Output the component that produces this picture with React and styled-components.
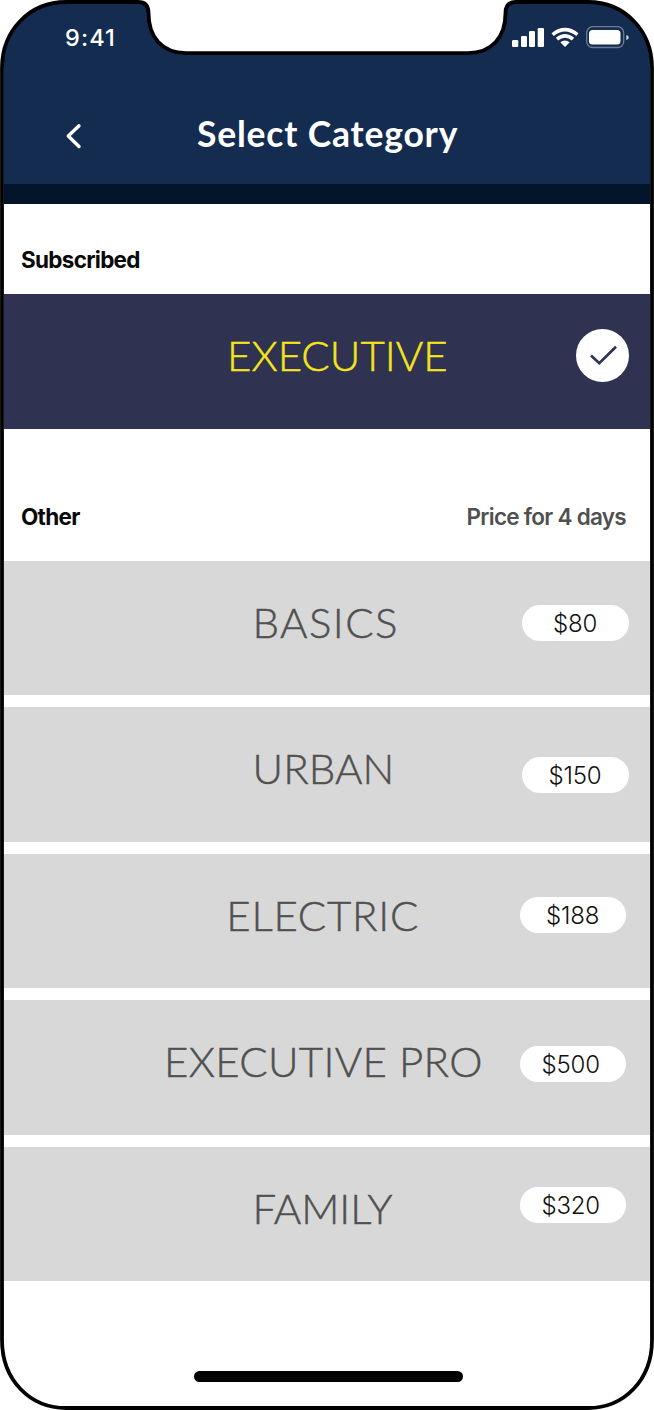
import React from "react";
import styled, { createGlobalStyle } from "styled-components";

const GlobalStyle = createGlobalStyle`
  * { box-sizing: border-box; }
  body { margin: 0; background: #fff; }
`;

const Phone = styled.div`
  position: relative;
  width: 654px;
  height: 1410px;
  padding: 0 4px;
  overflow: hidden;
  background: #fff;
  display: flex;
  flex-direction: column;
  font-family: Inter, sans-serif;
`;

const Header = styled.header`
  height: 204px;
  flex: none;
  background: #132c50;
  border-bottom: 20px solid #04142a;
  color: #fff;
`;

const StatusBar = styled.div`
  height: 74px;
  padding: 0 21px 0 61px;
  display: flex;
  align-items: center;
  justify-content: space-between;
`;

const Time = styled.span`
  font-size: 23.5px;
  font-weight: 500;
  letter-spacing: 1.1px;
  line-height: 28px;
  padding-top: 2px;
`;

const NavBar = styled.div`
  height: 110px;
  padding-left: 61px;
  display: flex;
  align-items: flex-start;
`;

const BackButton = styled.button`
  border: 0;
  padding: 0;
  background: none;
  width: 18px;
  height: 28px;
  margin-top: 48px;
`;

const Title = styled.h1`
  margin: 39px 0 0 114px;
  font: 700 35.5px/42px Lato, sans-serif;
  letter-spacing: 0.8px;
  white-space: nowrap;
`;

const SectionHead = styled.div`
  height: ${(p) => p.$height}px;
  flex: none;
  padding: 0 24px ${(p) => p.$bottom}px 17px;
  display: flex;
  align-items: flex-end;
  justify-content: space-between;
`;

const Heading = styled.h2`
  margin: 0;
  font-size: 22.5px;
  line-height: 30px;
  font-weight: ${(p) => (p.$muted ? 600 : 650)};
  letter-spacing: -0.72px;
  color: ${(p) => (p.$muted ? "#505050" : "#0a0a0a")};
  white-space: nowrap;
`;

const List = styled.div`
  display: flex;
  flex-direction: column;
  gap: 12.1px;
`;

const Row = styled.div`
  height: ${(p) => (p.$active ? 135 : 134.35)}px;
  flex: none;
  display: flex;
  align-items: flex-start;
  justify-content: space-between;
  background: ${(p) => (p.$active ? "#2f3250" : "#d8d8d8")};
  color: ${(p) => (p.$active ? "#f5e51b" : "#505050")};
`;

const Label = styled.span`
  margin-left: ${(p) => p.$left}px;
  padding-top: 36px;
  font: 300 42px/50px Lato, sans-serif;
  letter-spacing: ${(p) => p.$spacing}px;
  -webkit-text-stroke: 0.45px currentColor;
  white-space: nowrap;
`;

const Price = styled.span`
  width: ${(p) => p.$width}px;
  height: 36px;
  flex: none;
  margin: ${(p) => p.$top}px ${(p) => p.$right}px 0 0;
  padding-right: ${(p) => p.$shift}px;
  border-radius: 18px;
  background: #fff;
  color: #111;
  font-size: 24px;
  font-weight: 300;
  line-height: 37px;
  letter-spacing: -0.2px;
  text-align: center;
`;

const Check = styled.span`
  width: 53px;
  height: 53px;
  margin: 35px 21px 0 0;
  border-radius: 50%;
  background: #fff;
  flex: none;
`;

const HomeIndicator = styled.div`
  width: 269px;
  height: 11px;
  margin: auto 0 28px 190px;
  border-radius: 6px;
  background: #000;
`;

const Bezel = styled.svg`
  position: absolute;
  inset: 0;
  pointer-events: none;
`;

const categories = [
  { name: "BASICS", left: 248.5, spacing: 1.4, price: "$80", top: 44, right: 21, width: 107, shift: 1 },
  { name: "URBAN", left: 248.5, spacing: 0.1, price: "$150", top: 49.5, right: 21, width: 107, shift: 1 },
  { name: "ELECTRIC", left: 222.3, spacing: 0.75, price: "$188", top: 43.2, right: 23.6, width: 106.5, shift: 1 },
  { name: "EXECUTIVE PRO", left: 160, spacing: 0.33, price: "$500", top: 45.8, right: 23.6, width: 106.5, shift: 5 },
  { name: "FAMILY", left: 248.5, spacing: -0.05, price: "$320", top: 40.4, right: 23.6, width: 106.5, shift: 5 },
];

const outline =
  "M2 68C2 30 30 2 66 2H138C145 2 148.500 6 148.500 13C148.500 37 162 53.200 186 53.200H468C492 53.200 505.500 37 505.500 13C505.500 6 509 2 516 2H588C624 2 652 30 652 68V1340C652 1380 624 1408 588 1408H66C30 1408 2 1380 2 1340Z";

function StatusIcons() {
  return (
    <svg width="118" height="24" viewBox="511 25 118 24" fill="#fff">
      <rect x="512" y="40" width="6.300" height="7" rx="1.300" />
      <rect x="521" y="36" width="6" height="11" rx="1.300" />
      <rect x="529" y="31" width="6" height="16" rx="1.300" />
      <rect x="537.700" y="28" width="6.300" height="19" rx="1.300" />
      <g fill="none" stroke="#fff" strokeWidth="3.500">
        <path d="M552.600 34.600Q565 24.600 577.400 34.600" />
        <path d="M557 39.200Q565 32.600 573 39.200" />
      </g>
      <path d="M560.300 42.200Q565 38.800 569.700 42.200L565 47Z" />
      <rect x="586.700" y="26.700" width="37" height="20.800" rx="6" fill="none" stroke="#fff" strokeOpacity=".38" strokeWidth="1.300" />
      <rect x="589" y="30" width="31.500" height="14.500" rx="3.500" />
      <path d="M626.300 35C629.500 36.100 629.500 38.900 626.300 40Z" fillOpacity=".8" />
    </svg>
  );
}

export default function App() {
  return (
    <>
      <GlobalStyle />
      <Phone>
        <Header>
          <StatusBar>
            <Time>9:41</Time>
            <StatusIcons />
          </StatusBar>
          <NavBar>
            <BackButton aria-label="Back">
              <svg width="18" height="28" viewBox="0 0 18 28" fill="none" stroke="#fff" strokeWidth="3.400" strokeLinecap="round" strokeLinejoin="round" display="block">
                <path d="M14 3.800L3.300 14L14 24.500" />
              </svg>
            </BackButton>
            <Title>Select Category</Title>
          </NavBar>
        </Header>

        <SectionHead $height={90} $bottom={19}>
          <Heading>Subscribed</Heading>
        </SectionHead>
        <Row $active>
          <Label $left={223} $spacing={0.05}>EXECUTIVE</Label>
          <Check>
            <svg width="53" height="53" viewBox="0 0 53 53" fill="none" stroke="#2f3250" strokeWidth="2.700">
              <path d="M15 26.500L23.300 34.200L40 17.800" />
            </svg>
          </Check>
        </Row>

        <SectionHead $height={132} $bottom={29}>
          <Heading>Other</Heading>
          <Heading $muted>Price for 4 days</Heading>
        </SectionHead>
        <List>
          {categories.map((c) => (
            <Row key={c.name}>
              <Label $left={c.left} $spacing={c.spacing}>{c.name}</Label>
              <Price $top={c.top} $right={c.right} $width={c.width} $shift={c.shift}>{c.price}</Price>
            </Row>
          ))}
        </List>
        <HomeIndicator />

        <Bezel width="654" height="1410" viewBox="0 0 654 1410">
          <path d={"M-5-5H659V1415H-5Z" + outline} fill="#fff" fillRule="evenodd" />
          <path d={outline} fill="none" stroke="#000" strokeWidth="3.800" />
        </Bezel>
      </Phone>
    </>
  );
}
